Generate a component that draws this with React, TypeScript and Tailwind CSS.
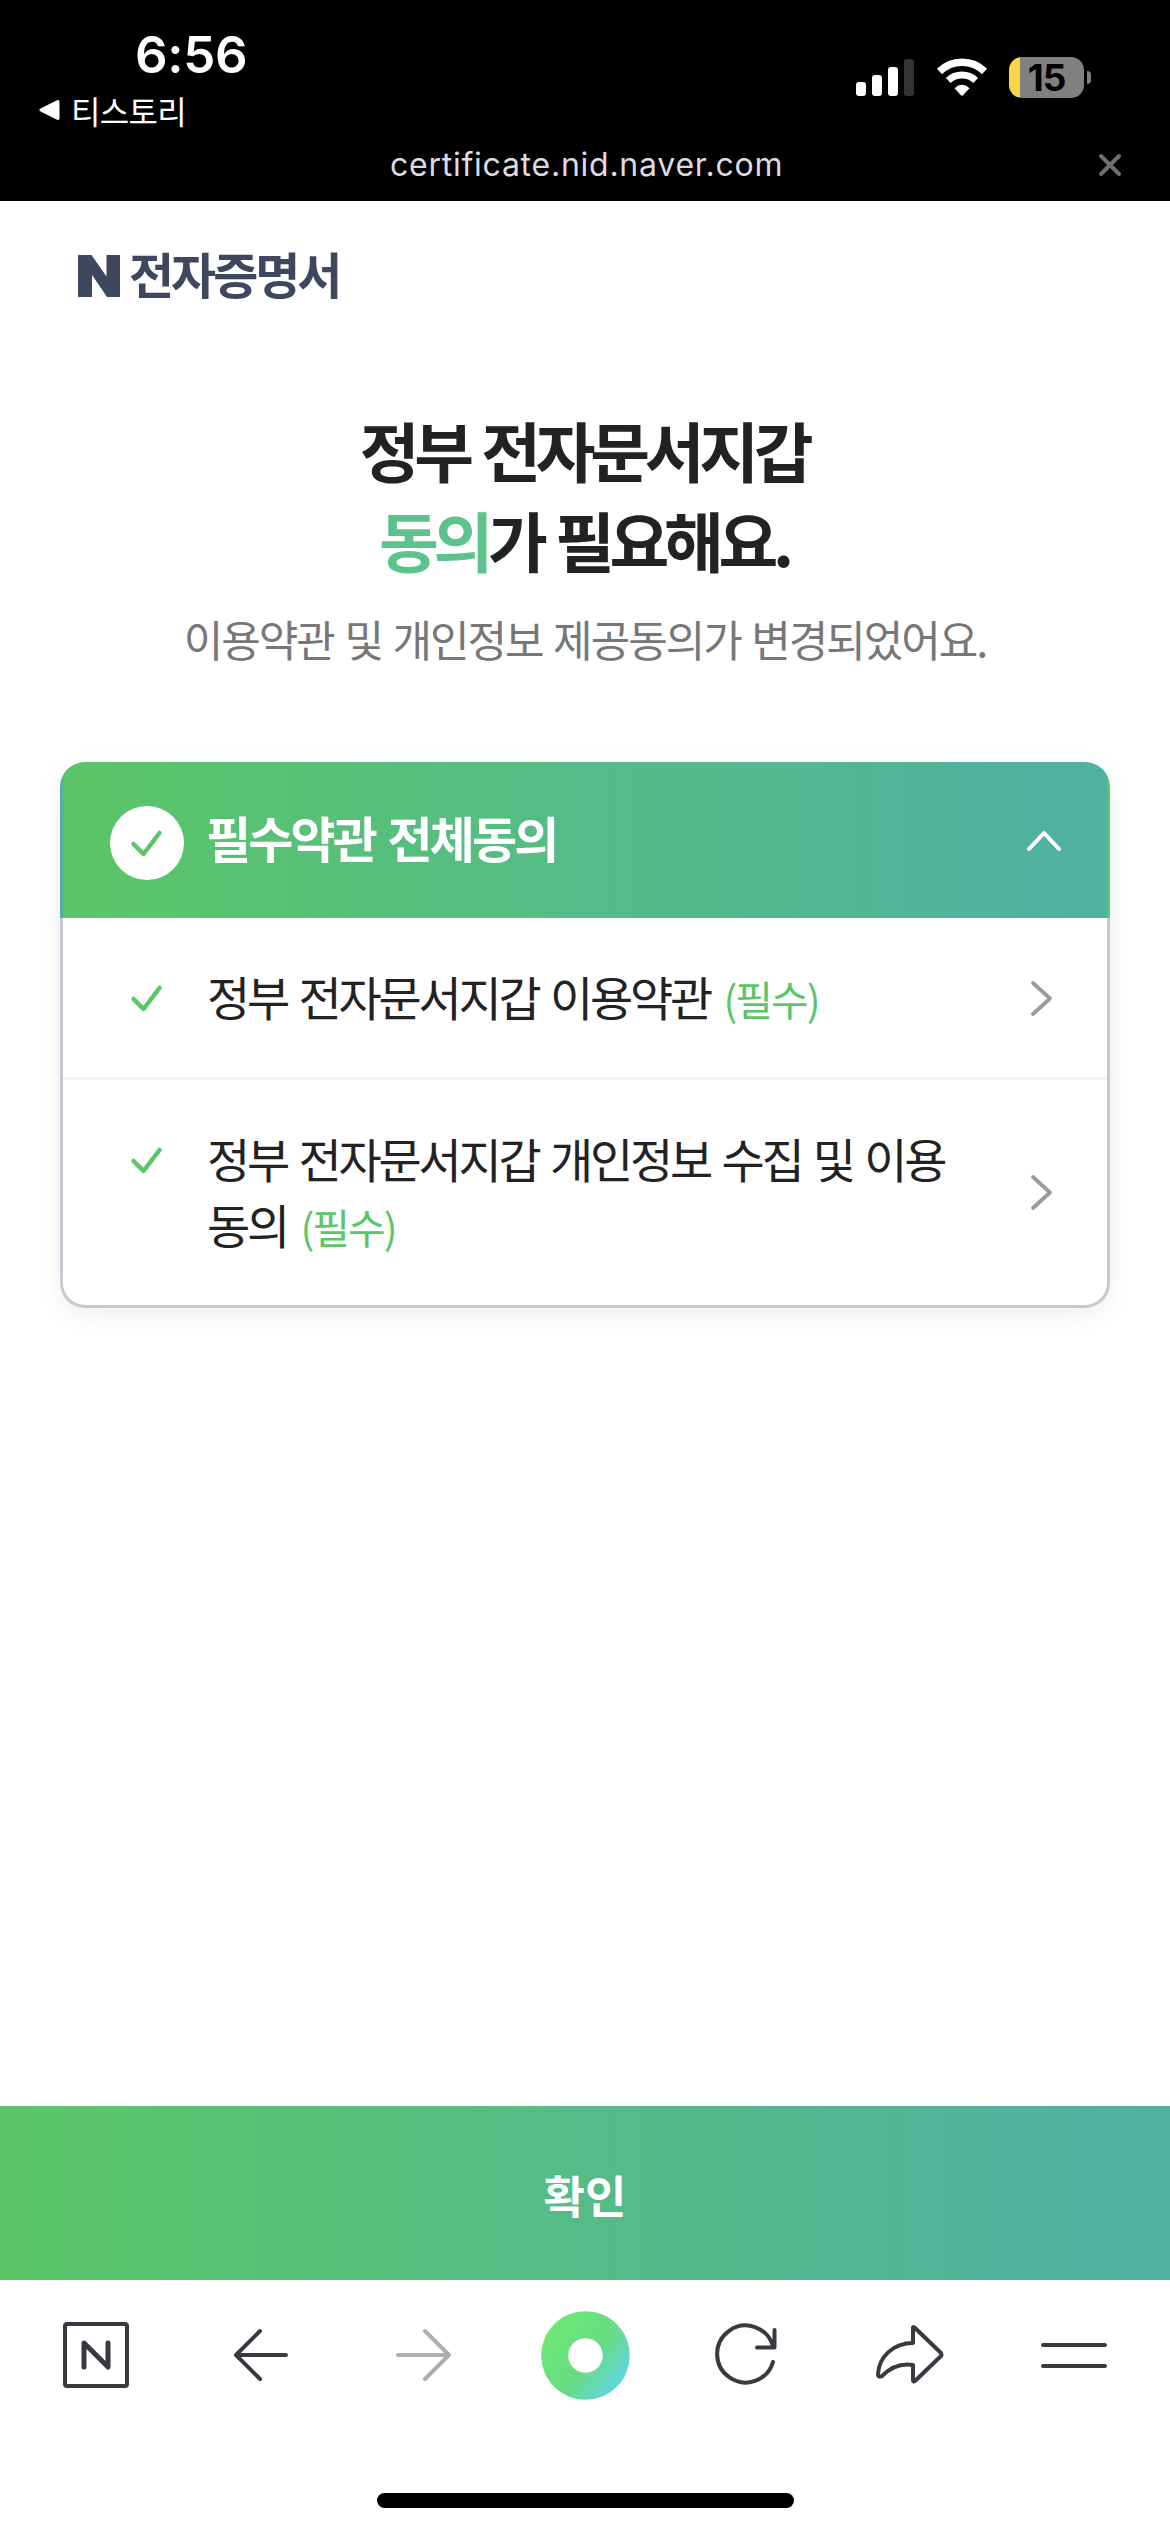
import type { ReactNode } from "react";

interface TermRowProps {
  children: ReactNode;
  className: string;
}

function CheckIcon() {
  return (
    <svg width="74" height="74" viewBox="0 0 74 74" fill="none" className="block">
      <path d="M23.5 38L33.5 48L49.5 27" stroke="#5bc568" strokeWidth="4.5" strokeLinecap="round" strokeLinejoin="round" />
    </svg>
  );
}

function TermRow({ children, className }: TermRowProps) {
  return (
    <li className={`flex pl-[47px] pr-[52px] ${className}`}>
      <CheckIcon />
      <p className="ml-[23px] mt-[2px] w-[760px] text-[47px] leading-[66px] tracking-[-3.2px] [word-spacing:4px] text-[#222]">
        {children}
      </p>
      <svg width="26" height="38" viewBox="0 0 26 38" fill="none" className="ml-auto self-center">
        <path d="M4 3L21 18.5L4 34" stroke="#9b9b9b" strokeWidth="3.8" strokeLinecap="round" strokeLinejoin="round" />
      </svg>
    </li>
  );
}

function Required() {
  return <span className="ml-[2px] text-[41px] tracking-[-2px] text-[#5bc568]">(필수)</span>;
}

function StatusBar() {
  return (
    <div className="flex h-[134px] justify-between">
      <div className="pl-[38px] pt-[25px]">
        <div className="pl-[97px] font-['Inter',sans-serif] text-[51px] font-semibold leading-[60px] tracking-[-0.3px]">6:56</div>
        <div className="mt-[4px] flex items-center">
          <svg width="22" height="22" viewBox="0 0 22 22" className="block">
            <path d="M2.5 9.6L18.5 1.4Q21.5 0 21.5 3V19Q21.5 22 18.5 20.6L2.5 12.4Q0 11 2.5 9.6Z" fill="#fff" />
          </svg>
          <span className="ml-[11px] text-[32px] leading-[42px] tracking-[-0.7px]">티스토리</span>
        </div>
      </div>
      <div className="flex items-start pr-[79px] pt-[57px]">
        <svg width="58" height="41" viewBox="0 0 58 41" fill="#fff">
          <rect y="25" width="10" height="14" rx="3" />
          <rect x="16" y="18" width="10" height="21" rx="3" />
          <rect x="32" y="10" width="10" height="29" rx="3" />
          <rect x="48" y="2" width="10" height="37" rx="3" fill="#333" />
        </svg>
        <svg width="52" height="41" viewBox="0 0 52 41" className="ml-[22px]" fill="none">
          <path d="M3.5 14.5A32 32 0 0 1 48.5 14.5" stroke="#fff" strokeWidth="7.5" />
          <path d="M12.3 23.5A20 20 0 0 1 39.7 23.5" stroke="#fff" strokeWidth="7" />
          <path d="M18.5 31.2Q26 24.5 33.5 31.2L27 38.2Q26 39.2 25 38.2Z" fill="#fff" />
        </svg>
        <div className="ml-[21px] flex items-center">
          <div className="flex h-[41px] w-[75px] items-center justify-center rounded-[13px] bg-[linear-gradient(90deg,#f9d648_11px,#808080_11px)] font-['Inter',sans-serif] text-[37px] font-bold leading-[41px] tracking-[-1px] text-black">
            15
          </div>
          <div className="ml-[3px] h-[13px] w-[4px] rounded-r-full bg-[#808080]" />
        </div>
      </div>
    </div>
  );
}

function Toolbar() {
  return (
    <nav className="grid h-[213px] grid-cols-7 content-start justify-items-center px-[14px] pt-[30px]">
      <svg width="90" height="90" viewBox="0 0 90 90" fill="none" stroke="#373a40" strokeWidth="4" strokeLinecap="round" strokeLinejoin="round">
        <rect x="14" y="14" width="62" height="62" rx="2" />
        <path d="M33 57V33L57 57V33" strokeWidth="5" />
      </svg>
      <svg width="90" height="90" viewBox="0 0 90 90" fill="none" stroke="#373a40" strokeWidth="4" strokeLinecap="round" strokeLinejoin="round">
        <path d="M72 45H22M46 21L22 45L46 69" />
      </svg>
      <svg width="90" height="90" viewBox="0 0 90 90" fill="none" stroke="#b0b0b0" strokeWidth="4" strokeLinecap="round" strokeLinejoin="round">
        <path d="M21 45H71M48 21L72 45L48 69" />
      </svg>
      <svg width="90" height="90" viewBox="0 0 90 90">
        <defs>
          <linearGradient id="home" x1="0.1" y1="0.2" x2="0.9" y2="0.85">
            <stop offset="0" stopColor="#6de874" />
            <stop offset="0.55" stopColor="#67dc83" />
            <stop offset="1" stopColor="#62d4e6" />
          </linearGradient>
        </defs>
        <circle cx="45.5" cy="45.5" r="44.3" fill="url(#home)" />
        <circle cx="45.5" cy="45.5" r="17.3" fill="#fff" />
      </svg>
      <svg width="90" height="90" viewBox="0 0 90 90" fill="none" stroke="#373a40" strokeWidth="4" strokeLinecap="round" strokeLinejoin="round">
        <path d="M70 52A28.5 28.5 0 1 1 70 36M71.5 20V37.5H54" />
      </svg>
      <svg width="90" height="90" viewBox="0 0 90 90" fill="none" stroke="#373a40" strokeWidth="4" strokeLinecap="round" strokeLinejoin="round">
        <path d="M47 18Q47 16 49 18L75 43Q76 44.5 75 46L49 71Q47 72.5 47 70V55C35 53 25 57 16 66Q12 68 12 64C13 47 27 33 47 33Z" />
      </svg>
      <svg width="90" height="90" viewBox="0 0 90 90" fill="none" stroke="#373a40" strokeWidth="4" strokeLinecap="round">
        <path d="M14 35H76M14 56H76" />
      </svg>
    </nav>
  );
}

export default function App() {
  return (
    <div className="flex h-[2532px] w-[1170px] flex-col bg-white font-['Noto_Sans_CJK_KR',sans-serif]">
      <header className="h-[201px] bg-black text-white">
        <StatusBar />
        <div className="flex items-center pl-[390px] pr-[48px]">
          <span className="mt-px font-['Inter',sans-serif] text-[32px] leading-[60px] tracking-[0.75px] text-[#dcdce0]">
            certificate.nid.naver.com
          </span>
          <svg width="24" height="24" viewBox="0 0 24 24" className="ml-auto">
            <path d="M3 3L21 21M21 3L3 21" stroke="#6f6f6f" strokeWidth="4" strokeLinecap="round" />
          </svg>
        </div>
      </header>

      <main className="flex-1">
        <div className="flex h-[150px] items-center pl-[78px] text-[#3d475e]">
          <svg width="42" height="42" viewBox="0 0 42 42" className="block">
            <path d="M0 0H13.5L28.5 21.5V0H42V42H29L14 20V42H0Z" fill="currentColor" />
          </svg>
          <h1 className="mb-[6px] ml-[9px] text-[49px] font-bold leading-[60px] tracking-[-3px]">전자증명서</h1>
        </div>

        <h2 className="mt-[53px] pr-[2px] text-center text-[65px] font-bold leading-[90px] tracking-[-5.3px] [word-spacing:3px] text-[#222]">
          정부 전자문서지갑
          <br />
          <span className="text-[#5bc38b]">동의</span>가 필요해요.
        </h2>
        <p className="mt-[24px] text-center text-[43px] leading-[60px] tracking-[-2.05px] [word-spacing:3px] text-[#777]">
          이용약관 및 개인정보 제공동의가 변경되었어요.
        </p>

        <section className="mx-[60px] mt-[94px] rounded-[25px] shadow-[0_6px_24px_rgba(0,0,0,0.07)]">
          <div className="flex h-[156px] items-center rounded-t-[25px] border-x-[3px] border-transparent bg-linear-to-r from-[#5bc566] to-[#50b1a2] pl-[47px] pr-[45px] pt-[5px]">
            <div className="rounded-full bg-white">
              <CheckIcon />
            </div>
            <h3 className="mb-[11px] ml-[22px] text-[49px] font-bold leading-[60px] tracking-[-2.8px] [word-spacing:4px] text-white">
              필수약관 전체동의
            </h3>
            <svg width="36" height="24" viewBox="0 0 36 24" fill="none" className="mb-[4px] ml-auto">
              <path d="M3 20L18 4L33 20" stroke="#fff" strokeWidth="4" strokeLinecap="round" strokeLinejoin="round" />
            </svg>
          </div>
          <ul className="rounded-b-[25px] border-[3px] border-t-0 border-[#c5c9d1]">
            <TermRow className="h-[162px] border-b-[3px] border-[#f2f2f2] pt-[43px] pb-[40px]">
              정부 전자문서지갑 이용약관 <Required />
            </TermRow>
            <TermRow className="h-[225px] pt-[43px] pb-[43px]">
              정부 전자문서지갑 개인정보 수집 및 이용
              <br />
              동의 <Required />
            </TermRow>
          </ul>
        </section>
      </main>

      <button
        type="button"
        className="h-[174px] bg-linear-to-r from-[#5bc566] to-[#50b1a2] pt-[3px] text-[45px] font-bold leading-[60px] text-white"
      >
        확인
      </button>
      <Toolbar />
      <div className="mx-auto mb-[24px] h-[15px] w-[417px] rounded-full bg-black" />
    </div>
  );
}
